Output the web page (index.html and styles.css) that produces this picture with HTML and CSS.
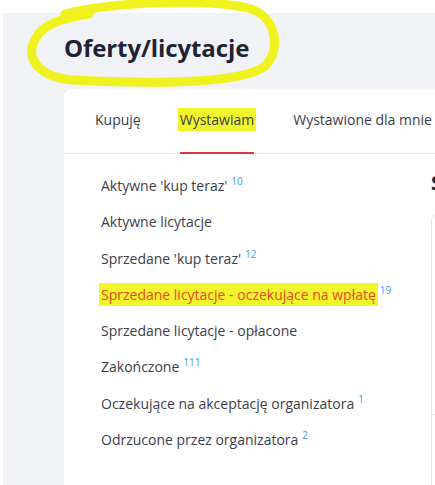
FILE: index.html
```html
<!DOCTYPE html>
<html lang="pl">
<head>
    <meta charset="UTF-8">
    <meta name="viewport" content="width=device-width, initial-scale=1.0">
    <title>Oferty/licytacje</title>
    <link rel="stylesheet" href="styles.css">
</head>
<body>
    <div class="page">
        <h1 class="title">Oferty/licytacje</h1>

        <div class="card">
            <div class="tabs">
                <span class="tab">Kupuję</span>
                <span class="tab active"><span class="marker">Wystawiam</span></span>
                <span class="tab">Wystawione dla mnie</span>
            </div>

            <div class="card-body">
                <ul class="menu">
                    <li>Aktywne 'kup teraz'<sup>10</sup></li>
                    <li>Aktywne licytacje</li>
                    <li>Sprzedane 'kup teraz'<sup>12</sup></li>
                    <li class="current"><span class="marker">Sprzedane licytacje - oczekujące na wpłatę</span><sup>19</sup></li>
                    <li>Sprzedane licytacje - opłacone</li>
                    <li>Zakończone<sup>111</sup></li>
                    <li>Oczekujące na akceptację organizatora<sup>1</sup></li>
                    <li>Odrzucone przez organizatora<sup>2</sup></li>
                </ul>

                <div class="content">
                    <h2 class="content-title">Sprzedane</h2>
                    <div class="panel">
                        <div class="panel-row"></div>
                    </div>
                </div>
            </div>
        </div>

        <!-- hand drawn circle around the heading -->
        <svg class="scribble" width="300" height="100" viewBox="0 0 300 100">
            <path d="M62 14 C110 2 200 -2 245 8 C275 16 278 52 262 66 C240 84 150 84 70 80 C40 78 24 62 30 44 C36 28 48 20 86 14"
                  fill="none" stroke="#f0f21f" stroke-width="9" stroke-linecap="round"/>
        </svg>
    </div>
</body>
</html>
```

FILE: styles.css
```css
body {
    margin: 0;
    background: #ffffff;
    font-family: "Open Sans", "Noto Sans", sans-serif;
    overflow: hidden;
}

.page {
    position: relative;
    margin: 13px 0 0 3px;
    padding: 17px 0 0 61px;
    background-color: #f1f2f6;
    height: 480px;
}

.title {
    margin: 0 0 24px;
    font-family: "Open Sans", sans-serif;
    font-size: 24px;
    font-weight: 700;
    line-height: 35px;
    color: #1f2233;
    letter-spacing: -0.1px;
}

.scribble {
    position: absolute;
    left: 0;
    top: -13px;
}

.card {
    background: #ffffff;
    border-radius: 8px 0 0 0;
    width: 420px;
    height: 400px;
}

.tabs {
    display: flex;
    gap: 39px;
    padding: 0 0 0 31px;
    border-bottom: 1px solid #e3e6ec;
    white-space: nowrap;
}

.tab {
    padding: 19px 0 20px;
    font-size: 14px;
    line-height: 24px;
    color: #3b3d4a;
    border-bottom: 2px solid transparent;
    margin-bottom: -1px;
}

.tab.active {
    border-bottom-color: #e0373c;
}

.marker {
    background: #f2f52a;
    padding: 2px 2px;
    margin: 0 -2px;
}

.card-body {
    display: flex;
}

.menu {
    list-style: none;
    margin: 0;
    padding: 22px 0 0 37px;
    width: 330px;
    flex-shrink: 0;
}

.menu li {
    font-size: 14px;
    line-height: 20px;
    color: #3b3d4a;
    margin-bottom: 16.3px;
    white-space: nowrap;
}

.menu li.current {
    color: #e8492c;
}

.menu sup {
    font-size: 10px;
    color: #3d98e6;
    margin-left: 4px;
    vertical-align: 6px;
    line-height: 0;
}

.content {
    padding-top: 16px;
}

.content-title {
    margin: 0 0 18px;
    font-size: 20px;
    font-weight: 700;
    color: #1f2233;
    line-height: 26px;
    white-space: nowrap;
}

.panel {
    border: 1px solid #e3e6ec;
    border-radius: 6px 0 0 0;
    border-right: none;
    height: 270px;
    width: 60px;
}

.panel-row {
    height: 199px;
    border-bottom: 1px solid #e3e6ec;
}
```
